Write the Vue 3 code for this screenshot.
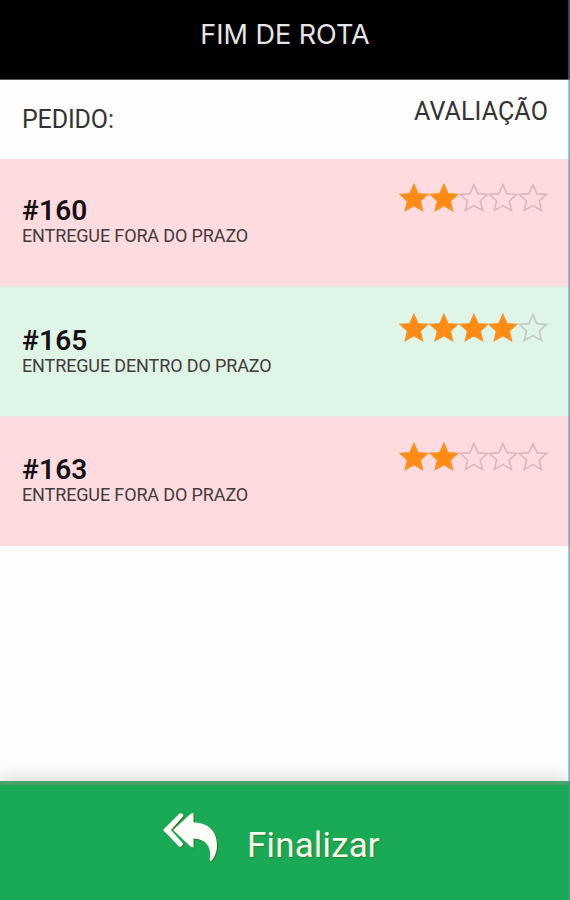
<template>
  <div class="tela">
    <header class="topo">
      <h1>FIM DE ROTA</h1>
    </header>

    <main class="conteudo">
      <div class="cabecalho">
        <span class="rotulo-pedido">PEDIDO:</span>
        <span class="rotulo-avaliacao">AVALIAÇÃO</span>
      </div>

      <ul class="lista">
        <li
          v-for="pedido in pedidos"
          :key="pedido.numero"
          class="pedido"
          :class="pedido.noPrazo ? 'dentro' : 'fora'"
        >
          <div class="info">
            <strong>#{{ pedido.numero }}</strong>
            <small>{{ textoPrazo(pedido) }}</small>
          </div>
          <div class="estrelas">
            <svg
              v-for="n in 5"
              :key="n"
              class="estrela"
              :class="{ cheia: n <= pedido.nota }"
              viewBox="0 0 30 30"
            >
              <path d="M15 1.5 L19 10.6 L28.7 11.4 L21.4 18 L23.6 27.6 L15 22.6 L6.4 27.6 L8.6 18 L1.3 11.4 L11 10.6 Z" />
            </svg>
          </div>
        </li>
      </ul>
    </main>

    <button class="finalizar" type="button">
      <svg class="icone" viewBox="0 0 56 50">
        <path d="M17.5 1.5 Q21 0.5 21.5 4 L9 18 L21 31.5 Q20.5 35.5 17 34.5 L1 18 Z" />
        <path d="M31.5 1 V10.5 C47 10.5 55 20 55 33 C55 40 52.5 45.5 49.5 49 Q48 49.5 47.7 47.5 C50 35 44 27 31.5 26.5 V35.5 L29 35 L11 18 L29 1.5 Z" />
      </svg>
      <span>Finalizar</span>
    </button>
  </div>
</template>

<script setup>
import { ref } from 'vue';

const pedidos = ref([
  { numero: 160, noPrazo: false, nota: 2 },
  { numero: 165, noPrazo: true, nota: 4 },
  { numero: 163, noPrazo: false, nota: 2 }
]);

// Texto mostrado embaixo do número do pedido
function textoPrazo(pedido) {
  return pedido.noPrazo ? 'ENTREGUE DENTRO DO PRAZO' : 'ENTREGUE FORA DO PRAZO';
}
</script>

<style>
body {
  margin: 0;
  background-color: #fefefe;
}
</style>

<style scoped>
.tela {
  position: relative;
  display: flex;
  flex-direction: column;
  height: 100vh;
  overflow: hidden;
  font-family: Roboto, "Liberation Sans", sans-serif;
  background-color: #fefefe;
}

/* filete azulado na borda direita */
.tela::after {
  content: '';
  position: absolute;
  top: 0;
  right: 0;
  width: 2px;
  height: 100%;
  background: linear-gradient(to right, rgba(90, 165, 190, 0.4), rgba(50, 135, 165, 0.75));
}

.topo {
  box-sizing: border-box;
  height: 80px;
  padding-top: 19px;
  background-color: #000;
  border-bottom: 1px solid #555;
  text-align: center;
}

.topo h1 {
  margin: 0;
  font-family: Inter, sans-serif;
  font-size: 27px;
  font-weight: 400;
  line-height: 32px;
  letter-spacing: 0;
  color: #e6e6e6;
}

.conteudo {
  flex: 1;
}

.cabecalho {
  box-sizing: border-box;
  display: flex;
  justify-content: space-between;
  height: 79px;
  padding: 17px 22px 0 22px;
  font-size: 25px;
  line-height: 30px;
  color: #333;
}

.rotulo-pedido {
  padding-top: 8px;
  letter-spacing: -0.15px;
}

.rotulo-avaliacao {
  letter-spacing: 0.12px;
}

.lista {
  margin: 0;
  padding: 0;
  list-style: none;
}

.pedido {
  box-sizing: border-box;
  display: flex;
  justify-content: space-between;
  height: 130px;
  padding: 26px 22px 0;
  border-top: 1px solid #eee4e3;
}

.pedido:first-child {
  height: 127px;
  padding-top: 23px;
  border-top-color: #fadde2;
}

.pedido:last-child {
  padding-top: 25px;
}

.fora {
  background-color: #fedbdf;
}

.dentro {
  background-color: #dff5e7;
}

.info {
  display: flex;
  flex-direction: column;
  padding-top: 13px;
}

.info strong {
  font-size: 28px;
  font-weight: 600;
  line-height: 30px;
  letter-spacing: 0.2px;
  color: #171012;
}

.info small {
  font-size: 18px;
  line-height: 20px;
  letter-spacing: -0.13px;
  color: #443b3d;
}

.estrelas {
  display: flex;
  height: 30px;
}

.estrela {
  width: 29.8px;
  height: 30px;
}

.estrela path {
  fill: none;
  stroke: rgba(120, 95, 100, 0.28);
  stroke-width: 1.6;
}

.estrela.cheia path {
  fill: #ff8b14;
  stroke: #f99325;
  stroke-width: 1.5;
}

.finalizar {
  display: flex;
  align-items: flex-start;
  justify-content: flex-start;
  box-sizing: border-box;
  height: 119px;
  padding: 27px 0 0 162px;
  border: 0;
  border-top: 4px solid #46a26a;
  background-color: #1aaa55;
  box-shadow: 0 -3px 18px rgba(0, 0, 0, 0.16);
  font-family: inherit;
  font-size: 35px;
  color: #f4fbec;
}

.icone {
  width: 56px;
  height: 50px;
  fill: #fbfff7;
  filter: drop-shadow(1px 1px 0.5px rgba(70, 80, 10, 0.6));
}

.finalizar span {
  margin: 13px 0 0 29px;
  line-height: 42px;
  letter-spacing: 0.15px;
  text-shadow: 1px 1px 1px rgba(70, 80, 10, 0.5);
}
</style>
